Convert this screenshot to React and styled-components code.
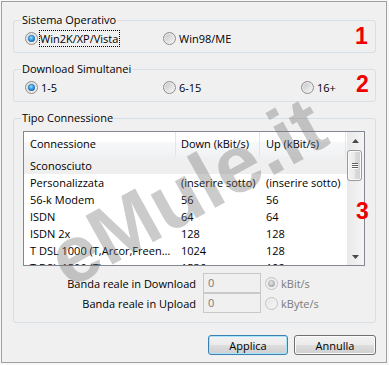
import React from 'react';
import styled, { createGlobalStyle } from 'styled-components';

const Global = createGlobalStyle`
  html, body { margin: 0; padding: 0; background: #f7f7f7; }
  body {
    font-family: "Open Sans", "Noto Sans", sans-serif;
    font-size: 11px;
    color: #000;
  }
`;

const Window = styled.div`
  position: relative;
  box-sizing: border-box;
  margin: 1px 0 0 1px;
  width: 386px;
  height: 362px;
  border: 1px solid #a0a0a0;
  background: #f0f0f0;
  padding: 18px 10px 0 11px;
  overflow: hidden;
`;

const Group = styled.div`
  position: relative;
  border: 1px solid #d5dfe5;
  border-radius: 3px;
  padding: ${(p) => p.$pad};
  margin-bottom: 16px;
`;

const Legend = styled.div`
  position: absolute;
  top: -9px;
  left: 7px;
  padding: 0 1px;
  line-height: 16px;
  background: #f0f0f0;
  white-space: nowrap;
`;

const Annot = styled.span`
  position: absolute;
  left: ${(p) => p.$x}px;
  top: ${(p) => p.$y}px;
  font: bold 23px/23px "Liberation Sans", Arial, sans-serif;
  color: #f00000;
`;

const RadioRow = styled.div`
  display: grid;
  grid-template-columns: repeat(3, 138px);
  align-items: center;
  height: 17px;
`;

const Option = styled.label`
  display: flex;
  align-items: center;
  white-space: nowrap;
  color: ${(p) => (p.$disabled ? '#7a7a7a' : '#000')};
`;

const Circle = styled.span`
  box-sizing: border-box;
  flex: none;
  width: 13px;
  height: 13px;
  border-radius: 50%;
  border: 1px solid ${(p) => (p.$disabled ? '#c2c2c2' : '#8d8d8d')};
  background: ${(p) =>
    p.$disabled
      ? 'linear-gradient(135deg, #e4e4e4, #f7f7f7)'
      : 'linear-gradient(135deg, #c4c4c4, #f9f9f9)'};
  box-shadow: inset 0 0 0 1px ${(p) => (p.$disabled ? '#f2f2f2' : '#eeeeee')};
  display: flex;
  align-items: center;
  justify-content: center;
  margin-right: 1px;
  &::after {
    content: '';
    display: ${(p) => (p.$checked ? 'block' : 'none')};
    width: 7px;
    height: 7px;
    border-radius: 50%;
    background: ${(p) =>
      p.$disabled
        ? 'radial-gradient(circle at 45% 40%, #e8e8e8 0%, #b4b4b4 55%, #8e8e8e 100%)'
        : 'radial-gradient(circle at 45% 40%, #9ee0ff 0%, #2f8fd8 45%, #0b3f7e 100%)'};
  }
`;

const OptText = styled.span`
  border: 1px dotted ${(p) => (p.$focus ? '#000' : 'transparent')};
  padding: 0 1px 0 0;
  margin-left: ${(p) => (p.$focus ? 0 : 1)}px;
  line-height: 15px;
`;

const List = styled.div`
  box-sizing: border-box;
  width: 342px;
  height: 135px;
  border: 1px solid #828790;
  background: #fff;
  display: flex;
  overflow: hidden;
`;

const ListBody = styled.div`
  flex: 1;
  min-width: 0;
  display: flex;
  flex-direction: column;
  overflow: hidden;
`;

const HeaderRow = styled.div`
  display: flex;
  flex: none;
  height: 25px;
  background: linear-gradient(#ffffff 0%, #ffffff 38%, #f7f8fa 40%, #f1f2f4 100%);
`;

const HeaderCell = styled.div`
  box-sizing: border-box;
  flex: none;
  width: ${(p) => p.$w}px;
  padding: 0 0 2px ${(p) => p.$pad}px;
  border-right: 1px solid #e3e5e8;
  display: flex;
  align-items: center;
  white-space: nowrap;
  overflow: hidden;
`;

const Row = styled.div`
  display: flex;
  flex: none;
  height: 17px;
  background: ${(p) => (p.$sel ? '#efefef' : 'transparent')};
`;

const Cell = styled.div`
  box-sizing: border-box;
  flex: none;
  width: ${(p) => p.$w}px;
  padding: 0 4px 0 ${(p) => p.$pad}px;
  line-height: 17px;
  white-space: nowrap;
  overflow: hidden;
  text-overflow: ellipsis;
`;

const ScrollBar = styled.div`
  flex: none;
  width: 17px;
  background: linear-gradient(90deg, #e9e9e9, #f5f5f5);
  display: flex;
  flex-direction: column;
`;

const Arrow = styled.div`
  flex: none;
  height: 17px;
  display: flex;
  align-items: center;
  justify-content: center;
`;

const Track = styled.div`
  flex: 1;
  padding-top: 1px;
`;

const Thumb = styled.div`
  box-sizing: border-box;
  width: 15px;
  height: 31px;
  border: 1px solid #9a9a9a;
  border-radius: 3px;
  background: linear-gradient(90deg, #f4f4f4 0%, #e9e9e9 50%, #dadada 51%, #d2d2d2 100%);
  box-shadow: inset 0 0 0 1px #fafafa;
  display: flex;
  flex-direction: column;
  align-items: center;
  justify-content: center;
  gap: 1px;
`;

const Grip = styled.span`
  width: 6px;
  height: 1px;
  background: #5d5d5d;
  box-shadow: 0 1px 0 #ffffff;
`;

const FormRow = styled.div`
  display: flex;
  align-items: center;
  height: 20px;
  margin-top: ${(p) => p.$mt || 0}px;
`;

const FormLabel = styled.div`
  width: 173px;
  text-align: right;
  white-space: nowrap;
`;

const Field = styled.div`
  box-sizing: border-box;
  margin: 0 4px 0 7px;
  width: 58px;
  height: 20px;
  border: 1px solid #c9c9c9;
  background: #f0f0f0;
  color: #7a7a7a;
  padding-left: 4px;
  line-height: 18px;
`;

const ButtonRow = styled.div`
  display: flex;
  justify-content: flex-end;
  gap: 6px;
  margin-top: -4px;
`;

const Button = styled.button`
  box-sizing: border-box;
  width: ${(p) => p.$w}px;
  height: 20px;
  padding: 0;
  font: inherit;
  color: #000;
  border-radius: 3px;
  border: 1px solid ${(p) => (p.$default ? '#3c7fb1' : '#707070')};
  background: linear-gradient(#f2f2f2 0%, #ebebeb 48%, #dddddd 52%, #cfcfcf 100%);
  box-shadow: inset 0 0 0 1px ${(p) => (p.$default ? '#a8e4fb' : '#fbfbfb')};
`;

const Watermark = styled.div`
  position: absolute;
  left: 185px;
  top: 190px;
  width: max-content;
  transform: translate(-50%, -50%) rotate(-29deg);
  font: bold 81px/1 "Liberation Sans", Arial, sans-serif;
  color: rgba(110, 110, 110, 0.36);
  white-space: nowrap;
  pointer-events: none;
`;

const Radio = ({ label, checked, focus, disabled }) => (
  <Option $disabled={disabled}>
    <Circle $checked={checked} $disabled={disabled} />
    <OptText $focus={focus}>{label}</OptText>
  </Option>
);

const cols = [
  { w: 152, pad: 6 },
  { w: 84, pad: 5 },
  { w: 86, pad: 6 },
];

const rows = [
  ['Sconosciuto', '', ''],
  ['Personalizzata', '(inserire sotto)', '(inserire sotto)'],
  ['56-k Modem', '56', '56'],
  ['ISDN', '64', '64'],
  ['ISDN 2x', '128', '128'],
  ['T DSL 1000 (T,Arcor,Freenet,1&1)', '1024', '128'],
  ['T DSL 1500 (T)', '1536', '192'],
];

const ArrowIcon = ({ down }) => (
  <svg width="7" height="4" viewBox="0 0 7 4">
    <path d={down ? 'M0 0H7L3.5 4Z' : 'M0 4H7L3.5 0Z'} fill="#4a4a4a" />
  </svg>
);

export default function App() {
  return (
    <>
      <Global />
      <Window>
        <Group $pad="9px 0 5px 11px">
          <Legend>Sistema Operativo</Legend>
          <RadioRow>
            <Radio label="Win2K/XP/Vista" checked focus />
            <Radio label="Win98/ME" />
          </RadioRow>
          <Annot $x={341} $y={4}>1</Annot>
        </Group>
        <Group $pad="9px 0 5px 11px">
          <Legend>Download Simultanei</Legend>
          <RadioRow>
            <Radio label="1-5" checked />
            <Radio label="6-15" />
            <Radio label="16+" />
          </RadioRow>
          <Annot $x={342} $y={3}>2</Annot>
        </Group>
        <Group $pad="12px 10px 9px 9px">
          <Legend>Tipo Connessione</Legend>
          <List>
            <ListBody>
              <HeaderRow>
                <HeaderCell $w={cols[0].w} $pad={cols[0].pad}>Connessione</HeaderCell>
                <HeaderCell $w={cols[1].w} $pad={cols[1].pad}>Down (kBit/s)</HeaderCell>
                <HeaderCell $w={cols[2].w} $pad={cols[2].pad}>Up (kBit/s)</HeaderCell>
              </HeaderRow>
              {rows.map((r, i) => (
                <Row key={i} $sel={i === 0}>
                  {r.map((c, j) => (
                    <Cell key={j} $w={cols[j].w} $pad={cols[j].pad}>{c}</Cell>
                  ))}
                </Row>
              ))}
            </ListBody>
            <ScrollBar>
              <Arrow><ArrowIcon /></Arrow>
              <Track>
                <Thumb>
                  <Grip />
                  <Grip />
                  <Grip />
                </Thumb>
              </Track>
              <Arrow><ArrowIcon down /></Arrow>
            </ScrollBar>
          </List>
          <FormRow $mt={7}>
            <FormLabel>Banda reale in Download</FormLabel>
            <Field>0</Field>
            <Radio label="kBit/s" checked disabled />
          </FormRow>
          <FormRow>
            <FormLabel>Banda reale in Upload</FormLabel>
            <Field>0</Field>
            <Radio label="kByte/s" disabled />
          </FormRow>
          <Annot $x={342} $y={81}>3</Annot>
        </Group>
        <ButtonRow>
          <Button $w={80} $default>Applica</Button>
          <Button $w={82}>Annulla</Button>
        </ButtonRow>
        <Watermark>eMule.it</Watermark>
      </Window>
    </>
  );
}
